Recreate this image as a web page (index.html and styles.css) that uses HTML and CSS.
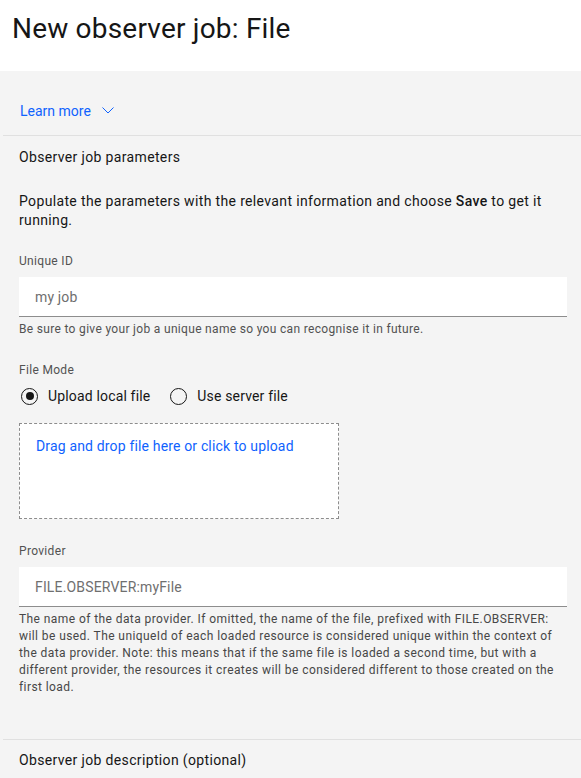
FILE: index.html
```html
<!DOCTYPE html>
<html lang="en">
<head>
<meta charset="utf-8">
<title>New observer job: File</title>
<link rel="stylesheet" href="styles.css">
</head>
<body>
<header class="page-header">
  <h1 class="page-title">New observer job: File</h1>
</header>
<main class="page-body">
  <div class="learn-more">
    <span>Learn more</span>
    <svg class="chevron" width="16" height="16" viewBox="0 0 16 16"><path d="M2.5 5.5 L8 11 L13.5 5.5" fill="none" stroke="#0f62fe" stroke-width="1"/></svg>
  </div>
  <section class="section">
    <h2 class="section-title">Observer job parameters</h2>
    <p class="intro">Populate the parameters with the relevant information and choose <strong>Save</strong> to get it running.</p>

    <div class="field">
      <label class="label">Unique ID</label>
      <div class="input"><span class="placeholder">my job</span></div>
      <div class="helper">Be sure to give your job a unique name so you can recognise it in future.</div>
    </div>

    <div class="field field-mode">
      <label class="label">File Mode</label>
      <div class="radios">
        <div class="radio"><span class="radio-circle checked"></span><span>Upload local file</span></div>
        <div class="radio"><span class="radio-circle"></span><span>Use server file</span></div>
      </div>
      <div class="dropzone"><span class="drop-link">Drag and drop file here or click to upload</span></div>
    </div>

    <div class="field field-provider">
      <label class="label">Provider</label>
      <div class="input"><span class="placeholder">FILE.OBSERVER:myFile</span></div>
      <div class="helper helper-long">The name of the data provider. If omitted, the name of the file, prefixed with FILE.OBSERVER: will be used. The uniqueId of each loaded resource is considered unique within the context of the data provider. Note: this means that if the same file is loaded a second time, but with a different provider, the resources it creates will be considered different to those created on the first load.</div>
    </div>
  </section>
  <section class="section section-desc">
    <h2 class="section-title">Observer job description (optional)</h2>
  </section>
</main>
</body>
</html>
```

FILE: styles.css
```css
* { box-sizing: border-box; }
html, body { margin: 0; padding: 0; }
body {
  font-family: Roboto, "Noto Sans", sans-serif;
  color: #161616;
  background: #f4f4f4;
  width: 581px;
  height: 778px;
  overflow: hidden;
}
.page-header {
  background: #ffffff;
  height: 71px;
  padding: 11px 0 0 12px;
}
.page-title {
  margin: 0;
  font-size: 28px;
  font-weight: 400;
  line-height: 36px;
  letter-spacing: 0.2px;
}
.page-body {
  padding-left: 3px;
}
.learn-more {
  display: flex;
  align-items: flex-start;
  gap: 9px;
  height: 65px;
  padding: 30px 0 0 17px;
  color: #0f62fe;
  font-size: 14px;
  line-height: 20px;
  border-bottom: 1px solid #e0e0e0;
}
.chevron { display: block; margin-top: 1px; }
.section {
  padding: 11px 14px 0 16px;
}
.section-title {
  margin: 0;
  font-size: 14px;
  font-weight: 400;
  line-height: 20px;
  letter-spacing: 0.35px;
}
.intro {
  margin: 25px 0 0 0;
  font-size: 14px;
  line-height: 19px;
  letter-spacing: 0.35px;
}
.intro strong { font-weight: 500; }
.field { margin-top: 23px; }
.label {
  display: block;
  font-size: 12px;
  line-height: 16px;
  color: #525252;
  margin-bottom: 8px;
  letter-spacing: 0.32px;
}
.input {
  height: 40px;
  background: #ffffff;
  border-bottom: 1px solid #8d8d8d;
  display: flex;
  align-items: center;
  padding-left: 16px;
  font-size: 14px;
  letter-spacing: 0.16px;
}
.placeholder { color: #6f6f6f; }
.helper {
  font-size: 12px;
  line-height: 17px;
  color: #525252;
  margin-top: 4px;
  letter-spacing: 0.32px;
}
.helper-long {
  color: #474747;
  letter-spacing: 0.42px;
}
.field-mode { margin-top: 24px; }
.radios {
  display: flex;
  gap: 18px;
  margin-top: 0;
  height: 20px;
  align-items: center;
  font-size: 14px;
  letter-spacing: 0.16px;
}
.radio {
  display: flex;
  align-items: center;
  gap: 10px;
  padding-left: 2px;
}
.radio-circle {
  width: 17px;
  height: 17px;
  border: 1px solid #161616;
  border-radius: 50%;
  display: flex;
  align-items: center;
  justify-content: center;
}
.radio-circle.checked::after {
  content: "";
  width: 8px;
  height: 8px;
  border-radius: 50%;
  background: #161616;
}
.dropzone {
  width: 320px;
  height: 96px;
  margin-top: 17px;
  background: #ffffff;
  border: 1px dashed #8d8d8d;
  padding: 14px 0 0 16px;
  font-size: 14px;
  letter-spacing: 0.16px;
}
.drop-link { color: #0f62fe; }
.field-provider { margin-top: 24px; }
.section-desc {
  margin-top: 43px;
  border-top: 1px solid #e0e0e0;
  padding-top: 10px;
}
```
